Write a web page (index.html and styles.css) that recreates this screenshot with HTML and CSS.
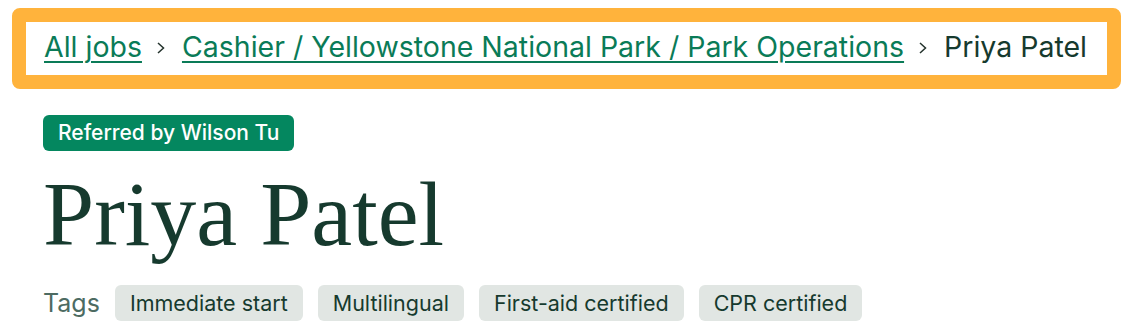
FILE: index.html
```html
<!DOCTYPE html>
<html lang="en">
  <head>
    <meta charset="UTF-8" />
    <meta name="viewport" content="width=device-width, initial-scale=1.0" />
    <title>Priya Patel</title>
    <link rel="stylesheet" href="styles.css">
  </head>
  <body>
    <div class="page">
      <nav class="crumbs">
        <a href="#">All jobs</a>
        <svg class="chevron" width="12" height="14" viewBox="0 0 12 14">
          <path d="M2 2 L7.5 7 L2 12" fill="none" stroke="#24332d" stroke-width="1.5" />
        </svg>
        <a href="#">Cashier / Yellowstone National Park / Park Operations</a>
        <svg class="chevron" width="12" height="14" viewBox="0 0 12 14">
          <path d="M2 2 L7.5 7 L2 12" fill="none" stroke="#24332d" stroke-width="1.5" />
        </svg>
        <span class="current">Priya Patel</span>
      </nav>

      <div class="candidate">
        <span class="badge">Referred by Wilson Tu</span>
        <h1>Priya Patel</h1>
        <div class="tags">
          <span class="tags-label">Tags</span>
          <span class="tag">Immediate start</span>
          <span class="tag">Multilingual</span>
          <span class="tag">First-aid certified</span>
          <span class="tag">CPR certified</span>
        </div>
      </div>
    </div>
  </body>
</html>
```

FILE: styles.css
```css
body {
  margin: 0;
  font-family: Inter, "Liberation Sans", Arial, sans-serif;
  background-color: #fff;
  color: #163a2e;
}
.page {
  padding: 8px 12px;
}
.crumbs {
  width: 1109px;
  box-sizing: border-box;
  border: 14px solid #ffb33c;
  border-radius: 8px;
  padding: 6px 18px 10px;
  display: flex;
  align-items: center;
  gap: 14px;
  font-size: 28.5px;
  line-height: 37px;
}
.crumbs a {
  color: #0a7b57;
  text-decoration: underline;
  text-decoration-thickness: 2px;
  text-underline-offset: 4px;
}
.chevron {
  flex-shrink: 0;
  margin-top: 3px;
}
.current {
  color: #163a2e;
}
.candidate {
  padding: 26px 31px 0;
}
.badge {
  display: inline-block;
  background-color: #04875f;
  color: #fff;
  font-size: 21px;
  font-weight: 500;
  line-height: 36px;
  padding: 0 15px;
  border-radius: 6px;
}
h1 {
  margin: 18px 0 0;
  font-family: "Liberation Serif", "Times New Roman", serif;
  font-weight: normal;
  font-size: 92px;
  line-height: 90px;
  color: #163a2e;
}
.tags {
  display: flex;
  align-items: center;
  gap: 15px;
  margin-top: 26px;
}
.tags-label {
  font-size: 25px;
  color: #4d6b62;
}
.tag {
  background-color: #e1e6e3;
  color: #163a2e;
  font-size: 21.5px;
  line-height: 36px;
  padding: 0 15px;
  border-radius: 6px;
}
```
